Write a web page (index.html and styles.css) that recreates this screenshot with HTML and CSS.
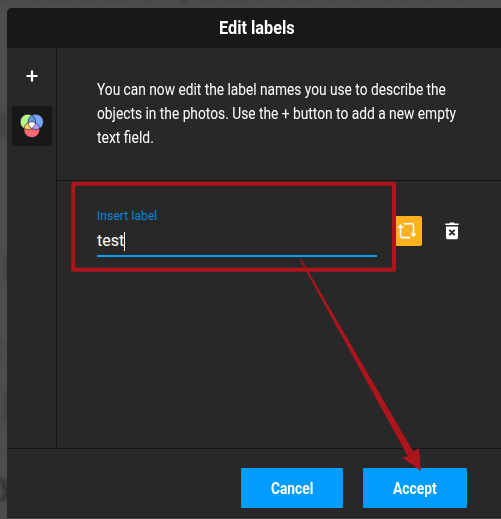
FILE: index.html
```html
<!DOCTYPE html>
<html lang="en">
<head>
<meta charset="utf-8">
<title>Edit labels</title>
<link rel="stylesheet" href="styles.css">
</head>
<body>
<svg class="backdrop" width="501" height="519" aria-hidden="true">
  <g fill="none" stroke="#353535" stroke-width="2">
    <path d="M0 0h8M16 0h4M30 0h8M48 0h12M65 0h8M80 0h14M102 0h6M116 0h8M145 1h6M179 1h10M204 0h12M228 0h10M241 1h5M253 0h12M278 0h9M300 0h12M330 0h7M350 0h10M381 0h7M400 0h9M425 0h7M454 0h9"/>
    <path d="M0 114v23M4 114v23M7 256v24M0 340l3 4M0 358h3M6 393v20q0 6-4 8"/>
    <path d="M0 480q5 0 4 7q5 3 2 9q-2 4-6 3" stroke="#222" stroke-width="3"/>
  </g>
</svg>
<div class="dialog">
  <header class="header"><h1 class="title">Edit labels</h1></header>
  <div class="body">
    <nav class="sidebar">
      <button class="tool" aria-label="Add">
        <svg width="12" height="12" viewBox="0 0 12 12"><path d="M6 .5v11M.5 6h11" stroke="#fff" stroke-width="2.2"/></svg>
      </button>
      <button class="tool active" aria-label="Colors">
        <svg width="24" height="24" viewBox="0 0 24 24">
          <defs>
            <clipPath id="left"><circle cx="7.9" cy="7.9" r="7.7"/></clipPath>
            <clipPath id="right"><circle cx="15.7" cy="7.9" r="7.7"/></clipPath>
          </defs>
          <circle cx="11.8" cy="15.6" r="7.9" fill="#ff6978"/>
          <circle cx="7.9" cy="7.9" r="7.7" fill="#baf58b"/>
          <circle cx="15.7" cy="7.9" r="7.7" fill="#76a6ff"/>
          <circle cx="7.9" cy="7.9" r="7.7" fill="#6597e6" clip-path="url(#right)"/>
          <circle cx="11.8" cy="15.6" r="7.9" fill="#ffd45e" clip-path="url(#left)"/>
          <circle cx="11.8" cy="15.6" r="7.9" fill="#b69bff" clip-path="url(#right)"/>
          <g clip-path="url(#left)"><circle cx="11.8" cy="15.6" r="7.9" fill="#fff" clip-path="url(#right)"/></g>
          <g fill="none" stroke="#181818" stroke-width=".6"><circle cx="7.9" cy="7.9" r="7.7"/><circle cx="15.7" cy="7.9" r="7.7"/><circle cx="11.8" cy="15.6" r="7.9"/></g>
        </svg>
      </button>
    </nav>
    <main class="content">
      <p class="intro">
        <span class="line line-1">You can now edit the label names you use to describe the</span>
        <span class="line line-2">objects in the photos. Use the + button to add a new empty</span>
        <span class="line line-3">text field.</span>
      </p>
      <div class="row">
        <div class="field">
          <span class="label">Insert label</span>
          <span class="value">test<i class="caret"></i></span>
        </div>
        <button class="swatch" aria-label="Change color">
          <svg width="20" height="18" viewBox="0 0 20 18"><g fill="none" stroke="#fff" stroke-width="1.6"><path d="M3.5 4v10q0 1.6 1.6 1.6H13M6.5 1.8h8.4q1.6 0 1.6 1.6V13"/></g><path d="M.3 6L3.5 2l3.2 4zM13.2 11.5h6.4l-3.2 3.8z" fill="#fff"/></svg>
        </button>
        <button class="trash" aria-label="Delete">
          <svg width="14" height="18" viewBox="0 0 14 18"><path d="M.3 1.5h4L5 .6h4l.7.9h4v1.4H.3zM1 4.5h12v11.3q0 1.4-1.4 1.4H2.4Q1 17.2 1 15.8z" fill="#fff"/><path d="M4.3 7.8l5.4 5.4M9.7 7.8l-5.4 5.4" stroke="#282828" stroke-width="1.8"/></svg>
        </button>
      </div>
    </main>
  </div>
  <footer class="footer">
    <button class="btn cancel"><span>Cancel</span></button>
    <button class="btn accept"><span>Accept</span></button>
  </footer>
</div>
<svg class="annotation" width="501" height="519" aria-hidden="true">
  <rect x="73.2" y="183.7" width="320.8" height="86" rx=".5" fill="none" stroke="#ad141b" stroke-width="4"/>
  <path d="M300.3 260.5L301.7 260L413.5 452L419 448L421 471L402 457.5L408 456.5Z" fill="#ad141b"/>
</svg>
</body>
</html>
```

FILE: styles.css
```css
* { box-sizing: border-box; }
body {
  margin: 0;
  width: 501px;
  height: 519px;
  overflow: hidden;
  position: relative;
  display: flow-root;
  background: #4d4d4d;
  color: #fff;
  font-family: Roboto, "Liberation Sans", sans-serif;
}
button { border: 0; padding: 0; color: inherit; font: inherit; background: none; }
svg { display: block; }
.backdrop { position: absolute; top: 0; left: 0; filter: blur(2px); }
.annotation { position: absolute; top: 0; left: 0; pointer-events: none; }
.dialog {
  position: relative;
  width: 500px;
  height: 510px;
  margin: 8px 0 0 7px;
  display: flex;
  flex-direction: column;
  background: #282828;
  border-bottom: 1px solid #222;
  border-radius: 5px 5px 0 0;
  overflow: hidden;
}
.header {
  height: 40px;
  flex: none;
  display: flex;
  align-items: center;
  justify-content: center;
  background: #181818;
}
.title { margin: 0; font-size: 18px; font-weight: 700; line-height: 40px; white-space: nowrap; transform: scaleX(.905); }
.body { height: 401px; flex: none; display: flex; border-bottom: 1px solid #151515; }
.sidebar {
  width: 50px;
  flex: none;
  padding: 8px 5px;
  display: flex;
  flex-direction: column;
  gap: 10px;
  border-right: 1px solid #151515;
}
.tool { width: 40px; height: 40px; display: grid; place-items: center; border-radius: 3px; }
.active { background: #181818; }
.content { flex: 1; }
.intro { height: 133px; margin: 0; padding: 30px 0 0 40px; border-bottom: 1px solid #151515; }
.line {
  display: block;
  width: max-content;
  font-size: 16px;
  line-height: 24px;
  white-space: nowrap;
  transform-origin: left;
}
.line-1 { transform: scaleX(.858); }
.line-2 { transform: scaleX(.861); }
.line-3 { transform: scaleX(.87); }
.row { display: flex; padding: 27px 0 0 40px; }
.field { width: 280px; height: 49px; border-bottom: 2px solid #009cff; display: flex; flex-direction: column; }
.label { font-size: 12px; line-height: 16px; letter-spacing: .1px; color: #0789dc; }
.value { display: flex; align-items: center; font-size: 16px; line-height: 20px; margin-top: 7px; }
.caret { width: 1px; height: 19px; background: #fff; }
.swatch { width: 30px; height: 30px; margin: 8px 0 0 15px; display: grid; place-items: center; background: #ffb01f; border-radius: 2px; }
.trash { width: 14px; height: 18px; margin: 14px 0 0 23px; }
.footer { flex: 1; display: flex; justify-content: flex-end; gap: 20px; padding: 19px 40px 0 0; }
.btn { height: 40px; background: #009cff; border-radius: 1px; font-size: 17px; font-weight: 700; line-height: 40px; }
.btn span { display: inline-block; transform: scaleX(.81); }
.cancel { width: 102px; }
.accept { width: 104px; }
```
